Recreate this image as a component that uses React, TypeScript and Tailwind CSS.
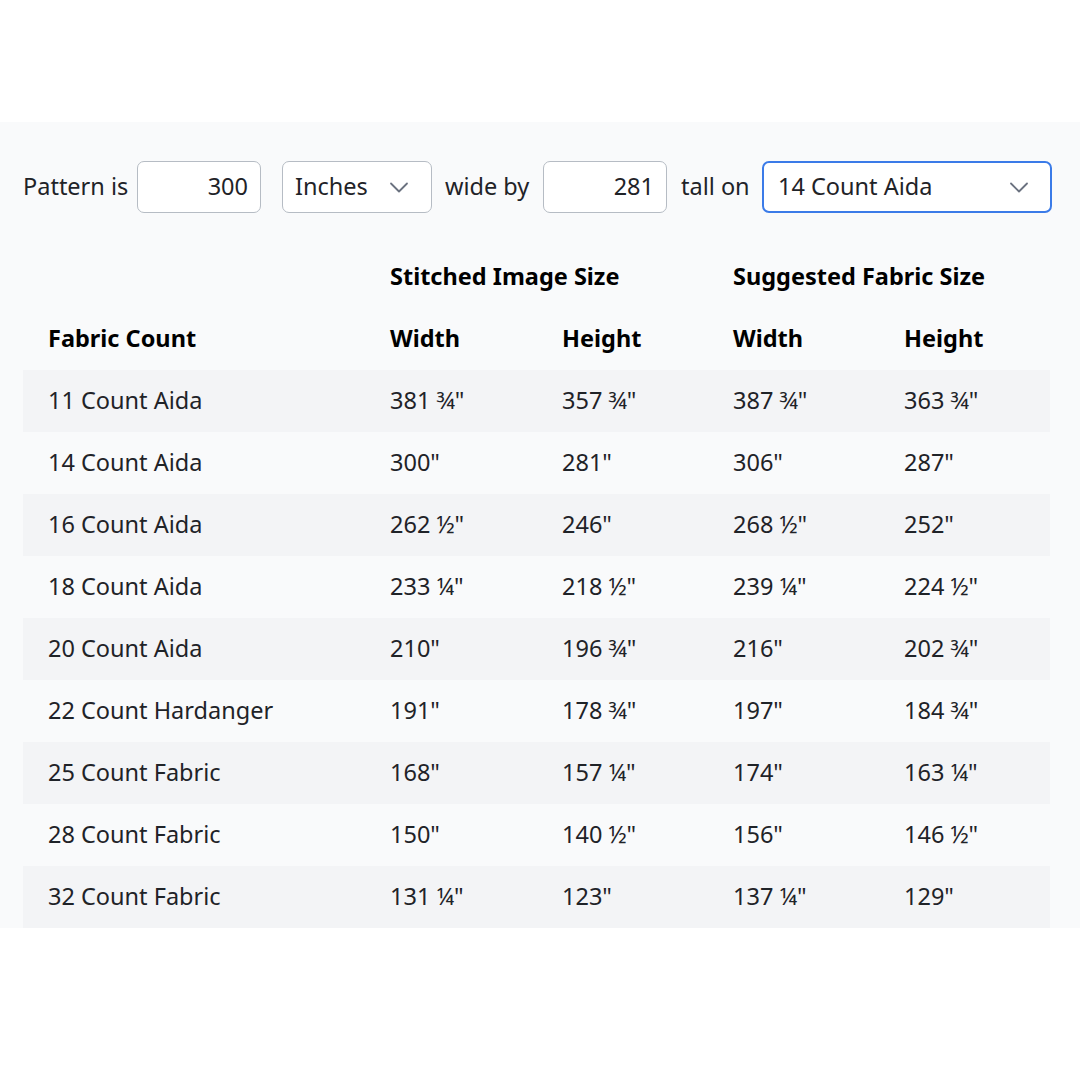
const rows = [
  ["11 Count Aida", "381 ¾\"", "357 ¾\"", "387 ¾\"", "363 ¾\""],
  ["14 Count Aida", "300\"", "281\"", "306\"", "287\""],
  ["16 Count Aida", "262 ½\"", "246\"", "268 ½\"", "252\""],
  ["18 Count Aida", "233 ¼\"", "218 ½\"", "239 ¼\"", "224 ½\""],
  ["20 Count Aida", "210\"", "196 ¾\"", "216\"", "202 ¾\""],
  ["22 Count Hardanger", "191\"", "178 ¾\"", "197\"", "184 ¾\""],
  ["25 Count Fabric", "168\"", "157 ¼\"", "174\"", "163 ¼\""],
  ["28 Count Fabric", "150\"", "140 ½\"", "156\"", "146 ½\""],
  ["32 Count Fabric", "131 ¼\"", "123\"", "137 ¼\"", "129\""],
];

function Chevron() {
  return (
    <svg width="20" height="11" viewBox="0 0 20 11" fill="none" className="shrink-0">
      <polyline points="2,1.5 10,9.5 18,1.5" stroke="#6b7280" strokeWidth="1.8" strokeLinecap="round" strokeLinejoin="round" />
    </svg>
  );
}

export default function App() {
  return (
    <div
      className="w-[1080px] h-[1080px] bg-white pt-[122px] text-[23.5px] text-[#1f2328]"
      style={{ fontFamily: '"Segoe UI", "Noto Sans", "Open Sans", sans-serif' }}
    >
      <div className="bg-[#f9fafb] pt-[39px] pl-[23px]">
        {/* Controls */}
        <div className="flex items-center h-[52px]">
          <span className="w-[114px] whitespace-nowrap">Pattern is</span>
          <div className="w-[124px] h-[52px] bg-white border border-[#b6bcc4] rounded-[7px] flex items-center justify-end pr-[12px]">
            300
          </div>
          <div className="ml-[21px] w-[150px] h-[52px] bg-white border border-[#b6bcc4] rounded-[7px] flex items-center justify-between pl-[12px] pr-[22px]">
            <span>Inches</span>
            <Chevron />
          </div>
          <span className="w-[111px] pl-[13px] whitespace-nowrap">wide by</span>
          <div className="w-[124px] h-[52px] bg-white border border-[#b6bcc4] rounded-[7px] flex items-center justify-end pr-[12px]">
            281
          </div>
          <span className="w-[95px] pl-[14px] whitespace-nowrap">tall on</span>
          <div className="w-[290px] h-[52px] bg-white border-2 border-[#3b7be8] rounded-[7px] flex items-center justify-between pl-[14px] pr-[21px]">
            <span>14 Count Aida</span>
            <Chevron />
          </div>
        </div>

        {/* Table */}
        <table className="mt-[33px] w-[1027px] border-collapse">
          <colgroup>
            <col className="w-[343px]" />
            <col className="w-[172px]" />
            <col className="w-[171px]" />
            <col className="w-[171px]" />
            <col className="w-[170px]" />
          </colgroup>
          <thead>
            <tr className="h-[62px] text-black">
              <th />
              <th colSpan={2} className="text-left pl-[24px] font-bold">
                Stitched Image Size
              </th>
              <th colSpan={2} className="text-left pl-[24px] font-bold">
                Suggested Fabric Size
              </th>
            </tr>
            <tr className="h-[62px] text-black">
              <th className="text-left pl-[25px] font-bold">Fabric Count</th>
              <th className="text-left pl-[24px] font-bold">Width</th>
              <th className="text-left pl-[24px] font-bold">Height</th>
              <th className="text-left pl-[24px] font-bold">Width</th>
              <th className="text-left pl-[24px] font-bold">Height</th>
            </tr>
          </thead>
          <tbody>
            {rows.map((r, i) => (
              <tr key={r[0]} className={i % 2 === 0 ? "h-[62px] bg-[#f3f4f6]" : "h-[62px]"}>
                <td className="pl-[25px]">{r[0]}</td>
                <td className="pl-[24px]">{r[1]}</td>
                <td className="pl-[24px]">{r[2]}</td>
                <td className="pl-[24px]">{r[3]}</td>
                <td className="pl-[24px]">{r[4]}</td>
              </tr>
            ))}
          </tbody>
        </table>
      </div>
    </div>
  );
}
